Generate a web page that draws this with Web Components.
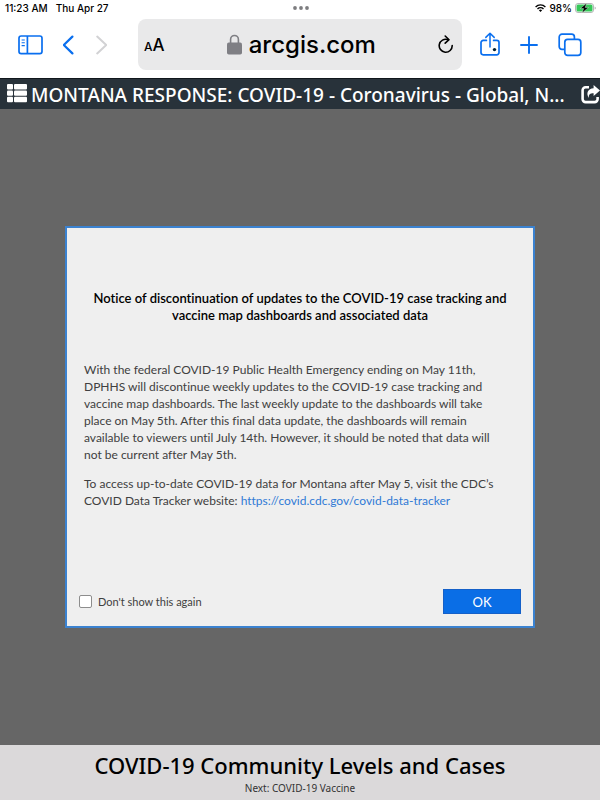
<!DOCTYPE html>
<html lang="en">
<head>
<meta charset="utf-8">
<meta name="viewport" content="width=device-width, initial-scale=1">
<title>Montana Response: COVID-19</title>
<style>
  body {
    margin: 0;
    min-height: 100vh;
    display: flex;
    flex-direction: column;
    background: #666666;
    color: #000000;
    font-family: "Noto Sans", sans-serif;
  }
  map-stage { flex: 1; }
</style>
</head>
<body>
  <status-bar time="11:23 AM" date="Thu Apr 27" battery="98%"></status-bar>
  <browser-toolbar>arcgis.com</browser-toolbar>
  <story-header>MONTANA RESPONSE: COVID-19 - Coronavirus - Global, N...</story-header>
  <map-stage>
    <notice-dialog>
      <span slot="title">Notice of discontinuation of updates to the COVID-19 case tracking and<br>vaccine map dashboards and associated data</span>
      <p>With the federal COVID-19 Public Health Emergency ending on May 11th,<br>
        DPHHS will discontinue weekly updates to the COVID-19 case tracking and<br>
        vaccine map dashboards. The last weekly update to the dashboards will take<br>
        place on May 5th. After this final data update, the dashboards will remain<br>
        available to viewers until July 14th. However, it should be noted that data will<br>
        not be current after May 5th.</p>
      <p>To access up-to-date COVID-19 data for Montana after May 5, visit the CDC’s<br>
        COVID Data Tracker website: <a href="https://covid.cdc.gov/covid-data-tracker">https://covid.cdc.gov/covid-data-tracker</a></p>
    </notice-dialog>
  </map-stage>
  <story-footer>
    COVID-19 Community Levels and Cases
    <span slot="next">Next: COVID-19 Vaccine</span>
  </story-footer>

<script>
class StatusBar extends HTMLElement {
  connectedCallback() {
    this.attachShadow({ mode: 'open' });
    this.shadowRoot.innerHTML = `
      <style>
        :host {
          display: grid;
          grid-template-columns: 1fr auto 1fr;
          align-items: center;
          height: 16px;
          padding: 0 4px 0 5px;
          background: #ffffff;
          font: 500 10px/16px Inter, sans-serif;
        }
        .left { display: flex; gap: 8px; }
        .right { display: flex; gap: 3px; justify-content: flex-end; align-items: center; }
        svg { display: block; }
      </style>
      <div class="left"><span>${this.getAttribute('time')}</span><span>${this.getAttribute('date')}</span></div>
      <svg width="18" height="6" viewBox="0 0 18 6" fill="#7d7d80" aria-hidden="true">
        <circle cx="3" cy="3" r="1.9"/><circle cx="9" cy="3" r="1.9"/><circle cx="15" cy="3" r="1.9"/>
      </svg>
      <div class="right">
        <svg width="11" height="8" viewBox="0 0 11 8" fill="none" stroke="#000" stroke-width="1.4" aria-hidden="true">
          <path d="M.6 2.9a7 7 0 0 1 9.8 0M2.5 4.9a4.3 4.3 0 0 1 6 0"/>
          <path d="M5.5 8 3.9 6.3a2.3 2.3 0 0 1 3.2 0z" fill="#000" stroke="none"/>
        </svg>
        <span>${this.getAttribute('battery')}</span>
        <svg width="21" height="10" viewBox="0 0 21 10" aria-hidden="true">
          <rect x=".5" y=".5" width="18" height="9" rx="2.5" fill="#fff" stroke="#a3a3a5" stroke-width=".8"/>
          <rect x="1.5" y="1.5" width="16" height="7" rx="1.5" fill="#35c759"/>
          <path d="M19.7 3.4v3.2c.7-.3 1-.9 1-1.6s-.3-1.3-1-1.6z" fill="#a3a3a5"/>
          <path d="M11.8 0 5.2 5.6h3.400L7 10l6.600-5.600h-3.400z" fill="#000" stroke="#eaffef" stroke-width=".4"/>
        </svg>
      </div>
    `;
  }
}
customElements.define('status-bar', StatusBar);

class BrowserToolbar extends HTMLElement {
  connectedCallback() {
    this.attachShadow({ mode: 'open' });
    this.shadowRoot.innerHTML = `
      <style>
        :host {
          display: grid;
          grid-template-columns: 120px 1fr 120px;
          gap: 18px;
          align-items: center;
          padding: 3px 0 8px;
          background: #ffffff;
          font-family: Inter, sans-serif;
        }
        button {
          display: flex;
          align-items: center;
          padding: 0;
          border: none;
          background: none;
          color: #0a6fef;
          font: inherit;
          cursor: pointer;
        }
        .group { display: flex; align-items: center; gap: 20px; }
        .start { padding-left: 18px; }
        .forward { color: #d2d2d4; }
        .field {
          display: flex;
          align-items: center;
          justify-content: space-between;
          height: 51px;
          padding: 0 8px 0 6px;
          border-radius: 8px;
          background: #e9e9ea;
        }
        .field button { color: #000000; }
        .size { align-items: baseline; font-size: 12px; font-weight: 500; }
        .size span { font-size: 17px; }
        .field .address {
          gap: 7px;
          font-size: 24px;
          font-weight: 500;
          line-height: 32px;
        }
        svg { display: block; fill: none; stroke: currentColor; stroke-width: 1.7; }
      </style>

      <div class="group start">
        <button aria-label="Show sidebar">
          <svg width="25" height="20" viewBox="0 0 25 20">
            <rect x="1" y="1" width="23" height="17.6" rx="2.2"/>
            <path d="M9.4 1v17.6"/>
            <path d="M3.6 5h3.2M3.6 7.8h3.2M3.6 10.6h3.2" stroke-width="1.1"/>
          </svg>
        </button>
        <button aria-label="Back">
          <svg width="12" height="20" viewBox="0 0 12 20" stroke-linecap="round" stroke-linejoin="round"><path d="M9.4 1.6.8 10l8.600 8.400" stroke-width="2.2"/></svg>
        </button>
        <button class="forward" aria-label="Forward">
          <svg width="12" height="20" viewBox="0 0 12 20" stroke-linecap="round" stroke-linejoin="round"><path d="M2.200 1.600l9 8.400-9 8.400" stroke-width="2"/></svg>
        </button>
      </div>

      <div class="field">
        <button class="size" aria-label="Page settings">A<span>A</span></button>
        <button class="address">
          <svg width="15" height="21" viewBox="0 0 15 21" aria-hidden="true">
            <path d="M3.6 10V5.4a3.9 3.9 0 0 1 7.8 0V10" stroke="#7f7f84" stroke-width="1.6"/>
            <rect x="0" y="8.6" width="15" height="12" rx="1.8" fill="#7f7f84" stroke="none"/>
          </svg>
          <slot></slot>
        </button>
        <button aria-label="Reload">
          <svg width="16" height="19" viewBox="0 0 16 19" stroke-linecap="round" stroke-linejoin="round">
            <path d="M9.8 4.600A6.500 6.500 0 1 0 14.200 10.600" stroke-width="1.6"/>
            <path d="M7.2 1 11 4.700 7.200 8.200" stroke-width="1.6"/>
          </svg>
        </button>
      </div>

      <div class="group end">
        <button aria-label="Share">
          <svg width="20" height="26" viewBox="0 0 20 26" stroke-linecap="round" stroke-linejoin="round">
            <path d="M6.4 8.4H3.2A2.2 2.2 0 0 0 1 10.6v10A2.2 2.2 0 0 0 3.2 22.8h13.6A2.2 2.2 0 0 0 19 20.6v-10a2.2 2.2 0 0 0-2.2-2.2h-3.2"/>
            <path d="M10 15V1.4M5.8 5.4 10 1.2l4.2 4.2" stroke-width="1.5"/>
            <circle cx="14.5" cy="17.6" r="1.7" fill="#001f33" stroke="none"/>
          </svg>
        </button>
        <button aria-label="New tab">
          <svg width="18" height="18" viewBox="0 0 18 18" stroke-linecap="round"><path d="M9 1v16M1 9h16" stroke-width="1.9"/></svg>
        </button>
        <button aria-label="Show tabs">
          <svg width="24" height="24" viewBox="0 0 24 24">
            <path d="M6.6 16.4H4a2.8 2.8 0 0 1-2.8-2.8V4A2.8 2.8 0 0 1 4 1.2h9.6A2.8 2.8 0 0 1 16.4 4v2"/>
            <rect x="6.8" y="6.4" width="16" height="16" rx="2.8"/>
          </svg>
        </button>
      </div>
    `;
  }
}
customElements.define('browser-toolbar', BrowserToolbar);

class StoryHeader extends HTMLElement {
  connectedCallback() {
    this.attachShadow({ mode: 'open' });
    this.shadowRoot.innerHTML = `
      <style>
        :host {
          display: block;
          background: #28323a;
          border-top: 1px solid #10171c;
          color: #ffffff;
        }
        header {
          display: flex;
          align-items: center;
          gap: 3px;
          height: 30px;
          padding-left: 7px;
          overflow: hidden;
        }
        h1 {
          flex: 1;
          margin: 0;
          font-size: 19px;
          font-weight: 500;
          line-height: 30px;
          padding-top: 2px;
          white-space: nowrap;
        }
        button { flex: none; padding: 0; border: none; background: none; color: inherit; cursor: pointer; }
        svg { display: block; }
      </style>
      <header>
        <button aria-label="Contents">
          <svg width="21" height="20" viewBox="0 0 21 20" fill="currentColor">
            <rect x="0" y="0" width="6" height="5.4" rx="1"/><rect x="7" y="0" width="13" height="5.4" rx="1"/>
            <rect x="0" y="6.4" width="6" height="5.4" rx="1"/><rect x="7" y="6.4" width="13" height="5.4" rx="1"/>
            <rect x="0" y="12.8" width="6" height="5.4" rx="1"/><rect x="7" y="12.8" width="13" height="5.4" rx="1"/>
          </svg>
        </button>
        <h1><slot></slot></h1>
        <button aria-label="Share">
          <svg width="19" height="19" viewBox="0 0 19 19" fill="none" stroke="currentColor" stroke-width="2.6">
            <path d="M8 2.3H4.6A3 3 0 0 0 1.6 5.3v8.8a3 3 0 0 0 3 3h9a3 3 0 0 0 3-3V12"/>
            <path d="M12.6 0 19 5.6 12.6 11V8.200C9 8.200 7.400 9.400 8 13 4.600 8.400 7 3.400 12.600 3.200z" fill="currentColor" stroke="none"/>
          </svg>
        </button>
      </header>
    `;
  }
}
customElements.define('story-header', StoryHeader);

class MapStage extends HTMLElement {
  connectedCallback() {
    this.attachShadow({ mode: 'open' });
    this.shadowRoot.innerHTML = `
      <style>
        :host {
          display: flex;
          align-items: center;
          justify-content: center;
          padding: 16px 65px;
          background: #666666;
        }
        ::slotted(*) { flex: 1; max-width: 640px; }
      </style>
      <slot></slot>
    `;
  }
}
customElements.define('map-stage', MapStage);

class NoticeDialog extends HTMLElement {
  connectedCallback() {
    this.attachShadow({ mode: 'open' });
    this.shadowRoot.innerHTML = `
      <style>
        :host {
          display: block;
          box-sizing: border-box;
          border: 2px solid #3b82d0;
          background: #efefef;
          color: #404040;
          font-family: Lato, sans-serif;
          font-variant-ligatures: none;
        }
        section { padding: 62px 12px 12px; }
        h2 {
          margin: 0 0 37px;
          color: #000000;
          font-size: 13px;
          font-weight: 600;
          line-height: 17px;
          text-align: center;
        }
        .body { padding: 0 5px; font-size: 12px; line-height: 17px; white-space: nowrap; }
        ::slotted(p) { margin: 0 0 12px; }
        footer {
          display: flex;
          align-items: center;
          justify-content: space-between;
          margin-top: 80px;
        }
        label { display: flex; align-items: center; gap: 6px; font-size: 11px; line-height: 16px; }
        input {
          appearance: none;
          width: 13px;
          height: 13px;
          margin: 0;
          border: 1px solid #8d8d8d;
          border-radius: 2px;
          background: #ffffff;
        }
        input:checked { background: #0a6ee6; }
        button {
          width: 78px;
          height: 25px;
          padding: 0;
          border: 1px solid #1560c8;
          background: #0a6ee6;
          color: #ffffff;
          font: 13px/16px Lato, sans-serif;
          cursor: pointer;
        }
      </style>
      <section role="dialog" aria-labelledby="title">
        <h2 id="title"><slot name="title"></slot></h2>
        <div class="body"><slot></slot></div>
        <footer>
          <label><input type="checkbox"> Don't show this again</label>
          <button>OK</button>
        </footer>
      </section>
    `;

    // links come in through the slot, so they are coloured from here
    this.querySelectorAll('a').forEach(link => {
      link.style.color = '#2f7ad6';
      link.style.textDecoration = 'none';
    });

    this.shadowRoot.querySelector('button').addEventListener('click', () => {
      this.style.display = 'none';
    });
  }
}
customElements.define('notice-dialog', NoticeDialog);

class StoryFooter extends HTMLElement {
  connectedCallback() {
    this.attachShadow({ mode: 'open' });
    this.shadowRoot.innerHTML = `
      <style>
        :host {
          display: block;
          padding: 4px 0;
          background: #dbd9da;
          text-align: center;
        }
        h2 { margin: 0; font-size: 22px; font-weight: 500; line-height: 32px; }
        div { color: #333333; font-size: 10px; line-height: 15px; }
      </style>
      <h2><slot></slot></h2>
      <div><slot name="next"></slot></div>
    `;
  }
}
customElements.define('story-footer', StoryFooter);
</script>
</body>
</html>
